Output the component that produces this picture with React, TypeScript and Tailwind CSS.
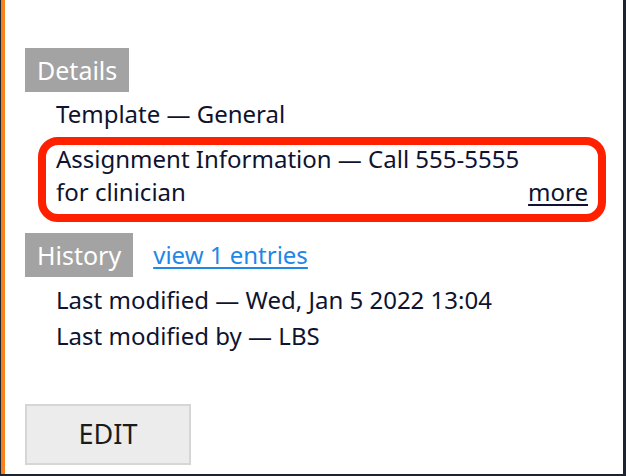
import React from 'react';

const body = "font-['Noto_Sans',sans-serif]";

function Label({ children }: { children: React.ReactNode }) {
  return (
    <div className="h-[44px] px-[12px] bg-[#a3a3a3] text-white text-[25px] leading-[44px] inline-flex items-center">
      {children}
    </div>
  );
}

export default function App() {
  return (
    <div className={`w-[626px] h-[476px] bg-[#1d2430] flex ${body}`}>
      <div className="w-px shrink-0" />
      <div className="w-[4px] h-[474px] bg-[#f7821b] shrink-0" />
      <div className="w-[618px] h-[474px] bg-white pl-5 pt-12 flex flex-col items-start text-[#0e1330]">
        <Label>Details</Label>

        <div className="ml-[31px] mt-[6px] text-[24px] leading-[32px]">Template — General</div>

        <div className="relative ml-[31px] mt-[12px] w-[532px] text-[24px] leading-[33px]">
          <div>Assignment Information — Call 555-5555</div>
          <div className="flex justify-between">
            <span>for clinician</span>
            <a href="#" className="underline underline-offset-[3px]">more</a>
          </div>
          <div className="absolute -top-[5px] -left-[18px] -right-[18px] -bottom-[14px] border-[8px] border-[#ff2000] rounded-[20px] pointer-events-none" />
        </div>

        <div className="mt-[25px] flex items-center gap-5">
          <Label>History</Label>
          <a href="#" className="text-[24px] leading-[32px] text-[#1f87e5] underline underline-offset-[3px]">
            view 1 entries
          </a>
        </div>

        <div className="ml-[31px] mt-[7px] text-[24px] leading-[32px]">Last modified — Wed, Jan 5 2022 13:04</div>
        <div className="ml-[31px] mt-[4px] text-[24px] leading-[32px]">Last modified by — LBS</div>

        <button className="mt-[52px] w-[166px] h-[61px] border-2 border-[#d6d6d6] bg-[#ececec] text-[27px] text-[#1b1b1b]">
          EDIT
        </button>
      </div>
    </div>
  );
}
